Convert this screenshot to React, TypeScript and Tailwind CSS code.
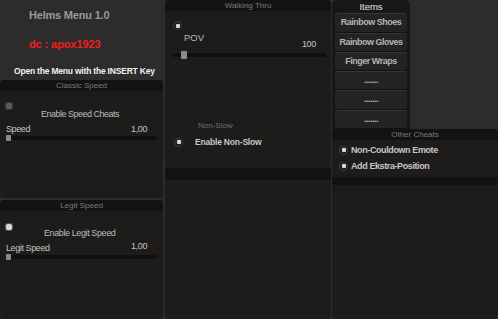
import React from "react";

const Header = ({ title }: { title: string }) => (
  <div className="h-[11px] bg-[#131313] rounded-t-[4px] flex items-center justify-center text-[8px] leading-none text-[#7a7a7a]">
    {title}
  </div>
);

const Check = ({ bright }: { bright?: boolean }) => (
  <div className={`w-[6px] h-[6px] rounded-[2px] ${bright ? "bg-[#d8d8d8] shadow-[0_0_0_1px_#555]" : "bg-[#5a5a5a] shadow-[0_0_0_1px_#3a3a3a]"}`} />
);

const RoundCheck = () => (
  <div className="w-[7px] h-[7px] rounded-full bg-[#202020] flex items-center justify-center shadow-[0_0_0_1px_#3a3a3a]">
    <div className="w-[4px] h-[4px] rounded-[1px] bg-[#d8d8d8]" />
  </div>
);

const Slider = ({ thumbLeft, wide }: { thumbLeft: number; wide?: boolean }) => (
  <div className="relative h-[4px] bg-[#0f0f0f] rounded-full">
    <div
      className={`absolute rounded-[1px] bg-[#8a8a8a] ${wide ? "w-[6px] h-[8px] top-[-2px]" : "w-[5px] h-[6px] top-[-1px]"}`}
      style={{ left: thumbLeft }}
    />
  </div>
);

const ItemBtn = ({ label }: { label: string }) => (
  <div className="h-[19px] mx-[3px] mb-[1px] rounded-[3px] bg-[#232323] border-t border-[#353535] shadow-[0_1px_0_#111] flex items-center justify-center text-[9px] tracking-[-0.5px] font-bold text-[#aeb6b6] whitespace-nowrap">
    {label}
  </div>
);

export default function App() {
  return (
    <div className="w-[498px] h-[319px] bg-[#2c2c2c] flex overflow-hidden font-['Liberation_Sans',Arial,sans-serif]">
      {/* Left column */}
      <div className="w-[163px] flex flex-col">
        <div className="h-[80px]">
          <div className="pt-[8px] pl-[29px] text-[11px] tracking-[-0.2px] font-bold text-[#9a9a9a] leading-[14px] whitespace-nowrap">Helms Menu 1.0</div>
          <div className="pt-[15px] pl-[29px] text-[11px] tracking-[-0.1px] font-bold text-[#f21f1f] leading-[14px] whitespace-nowrap">dc : apox1923</div>
          <div className="pt-[15px] pl-[14px] text-[8.5px] tracking-[-0.2px] font-bold text-[#f0f0f0] leading-[11px] whitespace-nowrap">Open the Menu with the INSERT Key</div>
        </div>
        <div className="h-[118px] bg-[#1d1c1b] rounded-[4px] flex flex-col">
          <Header title="Classic Speed" />
          <div className="px-[6px] pt-[12px]">
            <Check />
            <div className="text-[9px] tracking-[-0.5px] text-[#b4bcbc] pl-[35px] leading-[12px] mt-[-1px] whitespace-nowrap">Enable Speed Cheats</div>
            <div className="flex justify-between text-[9px] tracking-[-0.4px] text-[#c4c4c4] leading-[12px] mt-[3px] pr-[10px]">
              <span>Speed</span>
              <span>1,00</span>
            </div>
            <div className="mt-[1px]">
              <Slider thumbLeft={0} />
            </div>
          </div>
        </div>
        <div className="flex-1 mt-[2px] bg-[#1d1c1b] rounded-[4px] flex flex-col">
          <Header title="Legit Speed" />
          <div className="px-[6px] pt-[13px]">
            <Check bright />
            <div className="text-[9px] tracking-[-0.4px] text-[#b4bcbc] pl-[38px] leading-[12px] mt-[-3px] whitespace-nowrap">Enable Legit Speed</div>
            <div className="flex justify-between text-[9px] tracking-[-0.4px] text-[#c4c4c4] leading-[12px] mt-[1px] pr-[10px]">
              <span className="mt-[2px]">Legit Speed</span>
              <span>1,00</span>
            </div>
            <div className="mt-[1px]">
              <Slider thumbLeft={0} />
            </div>
          </div>
        </div>
      </div>

      {/* Middle column */}
      <div className="w-[166px] ml-[2px] flex flex-col">
        <div className="h-[168px] bg-[#1d1c1b] rounded-[4px] flex flex-col">
          <Header title="Walking Thru" />
          <div className="px-[9px] pt-[11px]">
            <RoundCheck />
            <div className="text-[9.5px] text-[#b4bcbc] pl-[10px] leading-[12px] mt-[3px]">POV</div>
            <div className="text-[9px] tracking-[-0.3px] text-[#c4c4c4] leading-[12px] text-right pr-[6px] mt-[-6px]">100</div>
            <div className="mt-[3px] ml-[-2px] mr-[-4px]">
              <Slider thumbLeft={9} wide />
            </div>
          </div>
          <div className="pl-[33px] mt-[64px] text-[8px] text-[#6e6e6e] leading-[10px]">Non-Slow</div>
          <div className="flex items-center pl-[10px] mt-[5px]">
            <RoundCheck />
            <span className="ml-[13px] text-[8.5px] tracking-[-0.2px] font-bold text-[#c4c8c8] leading-[12px] whitespace-nowrap">Enable Non-Slow</span>
          </div>
        </div>
        <div className="h-[12px] bg-[#121212]" />
        <div className="flex-1 bg-[#1d1c1b] rounded-b-[4px]" />
      </div>

      {/* Right column */}
      <div className="w-[166px] ml-[1px] flex flex-col">
        <div className="h-[129px] flex">
          <div className="w-[78px] bg-[#171717] rounded-t-[5px] overflow-hidden flex flex-col">
            <div className="h-[14px] flex items-center justify-center text-[9.5px] text-[#e6e6e6] leading-none">Items</div>
            <ItemBtn label="Rainbow Shoes" />
            <ItemBtn label="Rainbow Gloves" />
            <ItemBtn label="Finger Wraps" />
            <ItemBtn label="......." />
            <ItemBtn label="......." />
            <ItemBtn label="......." />
          </div>
        </div>
        <div className="h-[48px] bg-[#1d1c1b] rounded-t-[4px] flex flex-col">
          <Header title="Other Cheats" />
          <div className="flex items-center pl-[8px] mt-[4px]">
            <RoundCheck />
            <span className="ml-[4px] text-[9px] tracking-[-0.4px] font-bold text-[#c4c8c8] leading-[12px] whitespace-nowrap">Non-Couldown Emote</span>
          </div>
          <div className="flex items-center pl-[8px] mt-[4px]">
            <RoundCheck />
            <span className="ml-[4px] text-[9px] tracking-[-0.4px] font-bold text-[#c4c8c8] leading-[12px] whitespace-nowrap">Add Ekstra-Position</span>
          </div>
        </div>
        <div className="h-[8px] bg-[#121212]" />
        <div className="flex-1 bg-[#1d1c1b] rounded-b-[4px]" />
      </div>
    </div>
  );
}
